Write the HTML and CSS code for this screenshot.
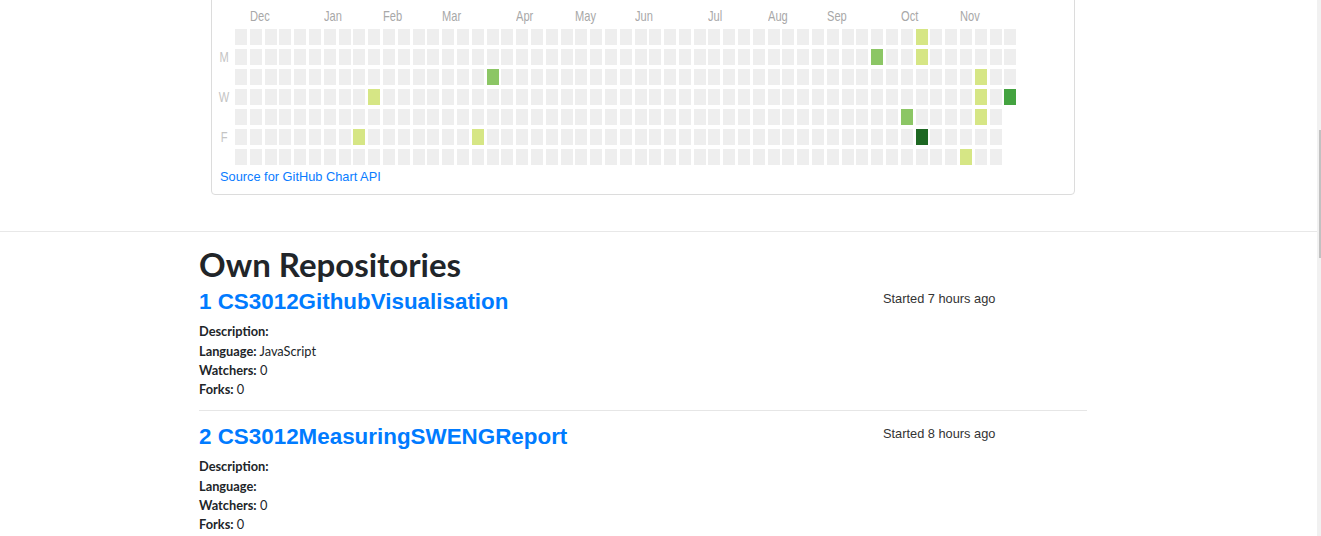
FILE: index.html
```html
<!DOCTYPE html>
<html lang="en">
<head>
<meta charset="utf-8">
<title>GitHub Visualisation</title>
<link rel="stylesheet" href="styles.css">
</head>
<body>
<div class="chart-box">
  <div class="chart">
    <div class="days">
      <span></span><span class="dl">M</span><span></span><span class="dl">W</span><span></span><span class="dl">F</span><span></span>
    </div>
    <div class="weeks">
      <div class="months">
        <span class="mo m-dec">Dec</span>
        <span class="mo m-jan">Jan</span>
        <span class="mo m-feb">Feb</span>
        <span class="mo m-mar">Mar</span>
        <span class="mo m-apr">Apr</span>
        <span class="mo m-may">May</span>
        <span class="mo m-jun">Jun</span>
        <span class="mo m-jul">Jul</span>
        <span class="mo m-aug">Aug</span>
        <span class="mo m-sep">Sep</span>
        <span class="mo m-oct">Oct</span>
        <span class="mo m-nov">Nov</span>
      </div>
      <div class="cells">
        <div class="wk"><i></i><i></i><i></i><i></i><i></i><i></i><i></i></div>
        <div class="wk"><i></i><i></i><i></i><i></i><i></i><i></i><i></i></div>
        <div class="wk"><i></i><i></i><i></i><i></i><i></i><i></i><i></i></div>
        <div class="wk"><i></i><i></i><i></i><i></i><i></i><i></i><i></i></div>
        <div class="wk"><i></i><i></i><i></i><i></i><i></i><i></i><i></i></div>
        <div class="wk"><i></i><i></i><i></i><i></i><i></i><i></i><i></i></div>
        <div class="wk"><i></i><i></i><i></i><i></i><i></i><i></i><i></i></div>
        <div class="wk"><i></i><i></i><i></i><i></i><i></i><i></i><i></i></div>
        <div class="wk"><i></i><i></i><i></i><i></i><i></i><i class="l1"></i><i></i></div>
        <div class="wk"><i></i><i></i><i></i><i class="l1"></i><i></i><i></i><i></i></div>
        <div class="wk"><i></i><i></i><i></i><i></i><i></i><i></i><i></i></div>
        <div class="wk"><i></i><i></i><i></i><i></i><i></i><i></i><i></i></div>
        <div class="wk"><i></i><i></i><i></i><i></i><i></i><i></i><i></i></div>
        <div class="wk"><i></i><i></i><i></i><i></i><i></i><i></i><i></i></div>
        <div class="wk"><i></i><i></i><i></i><i></i><i></i><i></i><i></i></div>
        <div class="wk"><i></i><i></i><i></i><i></i><i></i><i></i><i></i></div>
        <div class="wk"><i></i><i></i><i></i><i></i><i></i><i class="l1"></i><i></i></div>
        <div class="wk"><i></i><i></i><i class="l2"></i><i></i><i></i><i></i><i></i></div>
        <div class="wk"><i></i><i></i><i></i><i></i><i></i><i></i><i></i></div>
        <div class="wk"><i></i><i></i><i></i><i></i><i></i><i></i><i></i></div>
        <div class="wk"><i></i><i></i><i></i><i></i><i></i><i></i><i></i></div>
        <div class="wk"><i></i><i></i><i></i><i></i><i></i><i></i><i></i></div>
        <div class="wk"><i></i><i></i><i></i><i></i><i></i><i></i><i></i></div>
        <div class="wk"><i></i><i></i><i></i><i></i><i></i><i></i><i></i></div>
        <div class="wk"><i></i><i></i><i></i><i></i><i></i><i></i><i></i></div>
        <div class="wk"><i></i><i></i><i></i><i></i><i></i><i></i><i></i></div>
        <div class="wk"><i></i><i></i><i></i><i></i><i></i><i></i><i></i></div>
        <div class="wk"><i></i><i></i><i></i><i></i><i></i><i></i><i></i></div>
        <div class="wk"><i></i><i></i><i></i><i></i><i></i><i></i><i></i></div>
        <div class="wk"><i></i><i></i><i></i><i></i><i></i><i></i><i></i></div>
        <div class="wk"><i></i><i></i><i></i><i></i><i></i><i></i><i></i></div>
        <div class="wk"><i></i><i></i><i></i><i></i><i></i><i></i><i></i></div>
        <div class="wk"><i></i><i></i><i></i><i></i><i></i><i></i><i></i></div>
        <div class="wk"><i></i><i></i><i></i><i></i><i></i><i></i><i></i></div>
        <div class="wk"><i></i><i></i><i></i><i></i><i></i><i></i><i></i></div>
        <div class="wk"><i></i><i></i><i></i><i></i><i></i><i></i><i></i></div>
        <div class="wk"><i></i><i></i><i></i><i></i><i></i><i></i><i></i></div>
        <div class="wk"><i></i><i></i><i></i><i></i><i></i><i></i><i></i></div>
        <div class="wk"><i></i><i></i><i></i><i></i><i></i><i></i><i></i></div>
        <div class="wk"><i></i><i></i><i></i><i></i><i></i><i></i><i></i></div>
        <div class="wk"><i></i><i></i><i></i><i></i><i></i><i></i><i></i></div>
        <div class="wk"><i></i><i></i><i></i><i></i><i></i><i></i><i></i></div>
        <div class="wk"><i></i><i></i><i></i><i></i><i></i><i></i><i></i></div>
        <div class="wk"><i></i><i class="l2"></i><i></i><i></i><i></i><i></i><i></i></div>
        <div class="wk"><i></i><i></i><i></i><i></i><i></i><i></i><i></i></div>
        <div class="wk"><i></i><i></i><i></i><i></i><i class="l2"></i><i></i><i></i></div>
        <div class="wk"><i class="l1"></i><i class="l1"></i><i></i><i></i><i></i><i class="l4"></i><i></i></div>
        <div class="wk"><i></i><i></i><i></i><i></i><i></i><i></i><i></i></div>
        <div class="wk"><i></i><i></i><i></i><i></i><i></i><i></i><i></i></div>
        <div class="wk"><i></i><i></i><i></i><i></i><i></i><i></i><i class="l1"></i></div>
        <div class="wk"><i></i><i></i><i class="l1"></i><i class="l1"></i><i class="l1"></i><i></i><i></i></div>
        <div class="wk"><i></i><i></i><i></i><i></i><i></i><i></i><i></i></div>
        <div class="wk"><i></i><i></i><i></i><i class="l3"></i></div>
      </div>
    </div>
  </div>
  <a class="source" href="#">Source for GitHub Chart API</a>
</div>

<section class="repos">
  <h2 class="repos-title">Own Repositories</h2>

  <div class="repo">
    <div class="repo-main">
      <a class="repo-name" href="#">1 CS3012GithubVisualisation</a>
      <ul class="repo-info">
        <li><b>Description:</b></li>
        <li><b>Language:</b> JavaScript</li>
        <li><b>Watchers:</b> 0</li>
        <li><b>Forks:</b> 0</li>
      </ul>
    </div>
    <div class="repo-date">Started 7 hours ago</div>
  </div>

  <div class="repo">
    <div class="repo-main">
      <a class="repo-name" href="#">2 CS3012MeasuringSWENGReport</a>
      <ul class="repo-info">
        <li><b>Description:</b></li>
        <li><b>Language:</b></li>
        <li><b>Watchers:</b> 0</li>
        <li><b>Forks:</b> 0</li>
      </ul>
    </div>
    <div class="repo-date">Started 8 hours ago</div>
  </div>
</section>

<div class="scrollbar"><div class="scroll-thumb"></div></div>
</body>
</html>
```

FILE: styles.css
```css
html, body {
  margin: 0;
  padding: 0;
  overflow: hidden;
  background: #fff;
}

body {
  font-family: "Lato", "Noto Sans", sans-serif;
  color: #212529;
  width: 1317px;
}

/* ---------- contribution chart ---------- */
.chart-box {
  margin: -20px 0 0 211px;
  width: 862px;
  border: 1px solid #dcdcdc;
  border-radius: 4px;
  padding: 19px 0 10px 0;
  background: #fff;
}

.chart {
  display: flex;
  padding-left: 4px;
  font-family: "Liberation Sans", Arial, sans-serif;
}

.days {
  display: grid;
  grid-template-rows: repeat(7, 16px);
  row-gap: 4px;
  width: 16.2px;
  margin-top: 29px;
  margin-right: 2.8px;
}

.dl {
  display: block;
  font-size: 15px;
  line-height: 16px;
  color: #c4c4c4;
  text-align: center;
  transform: scaleX(0.74);
}

.months {
  display: grid;
  grid-template-columns: repeat(53, 12px);
  column-gap: 2.8px;
  height: 15px;
  padding-top: 8px;
  margin-bottom: 6px;
}

.mo {
  display: block;
  white-space: nowrap;
  font-size: 15px;
  line-height: 15px;
  color: #a8a8a8;
  transform: scaleX(0.74);
  transform-origin: left center;
  grid-row: 1;
}

.m-dec { grid-column: 2; }
.m-jan { grid-column: 7; }
.m-feb { grid-column: 11; }
.m-mar { grid-column: 15; }
.m-apr { grid-column: 20; }
.m-may { grid-column: 24; }
.m-jun { grid-column: 28; }
.m-jul { grid-column: 33; }
.m-aug { grid-column: 37; }
.m-sep { grid-column: 41; }
.m-oct { grid-column: 46; }
.m-nov { grid-column: 50; }

.cells {
  display: flex;
  column-gap: 2.8px;
}

.wk {
  display: flex;
  flex-direction: column;
  row-gap: 4px;
}

.wk i {
  display: block;
  width: 12px;
  height: 16px;
  background: #eeeeee;
}

.wk i.l1 { background: #d6e685; }
.wk i.l2 { background: #8cc665; }
.wk i.l3 { background: #44a340; }
.wk i.l4 { background: #1e6823; }

.source {
  display: block;
  margin: 4px 0 0 8px;
  font-family: "Liberation Sans", Arial, sans-serif;
  font-size: 12.8px;
  line-height: 15px;
  color: #0a7cff;
  text-decoration: none;
}

/* ---------- repositories ---------- */
.repos {
  margin-top: 36px;
  border-top: 1px solid #e8e8e8;
  padding: 13.4px 230px 0 199px;
}

.repos-title {
  margin: 0 0 4px 0;
  font-size: 33px;
  line-height: 1.2;
  font-weight: 700;
  color: #212529;
}

.repo {
  display: flex;
  align-items: flex-start;
  padding-bottom: 10.4px;
  border-bottom: 1px solid #e6e6e6;
}

.repo + .repo {
  padding-top: 13px;
}

.repo-main {
  flex: 0 0 684px;
}

.repo-name {
  display: block;
  font-family: "Liberation Sans", Arial, sans-serif;
  font-weight: 700;
  font-size: 22.4px;
  line-height: 1.2;
  color: #007bff;
  text-decoration: none;
}

.repo-info {
  list-style: none;
  margin: 6.5px 0 0 0;
  padding: 0;
  font-size: 12.8px;
  line-height: 19.3px;
}

.repo-info b {
  font-weight: 700;
}

.repo-date {
  font-family: "Liberation Sans", Arial, sans-serif;
  font-size: 12.8px;
  line-height: 19.2px;
  color: #333;
}

/* ---------- overlay scrollbar ---------- */
.scrollbar {
  position: fixed;
  top: 0;
  right: 0;
  width: 4px;
  height: 100%;
  background: #f1f1f1;
}

.scroll-thumb {
  margin: 130px 0 0 2px;
  width: 2px;
  height: 128px;
  background: #c1c1c1;
}
```
